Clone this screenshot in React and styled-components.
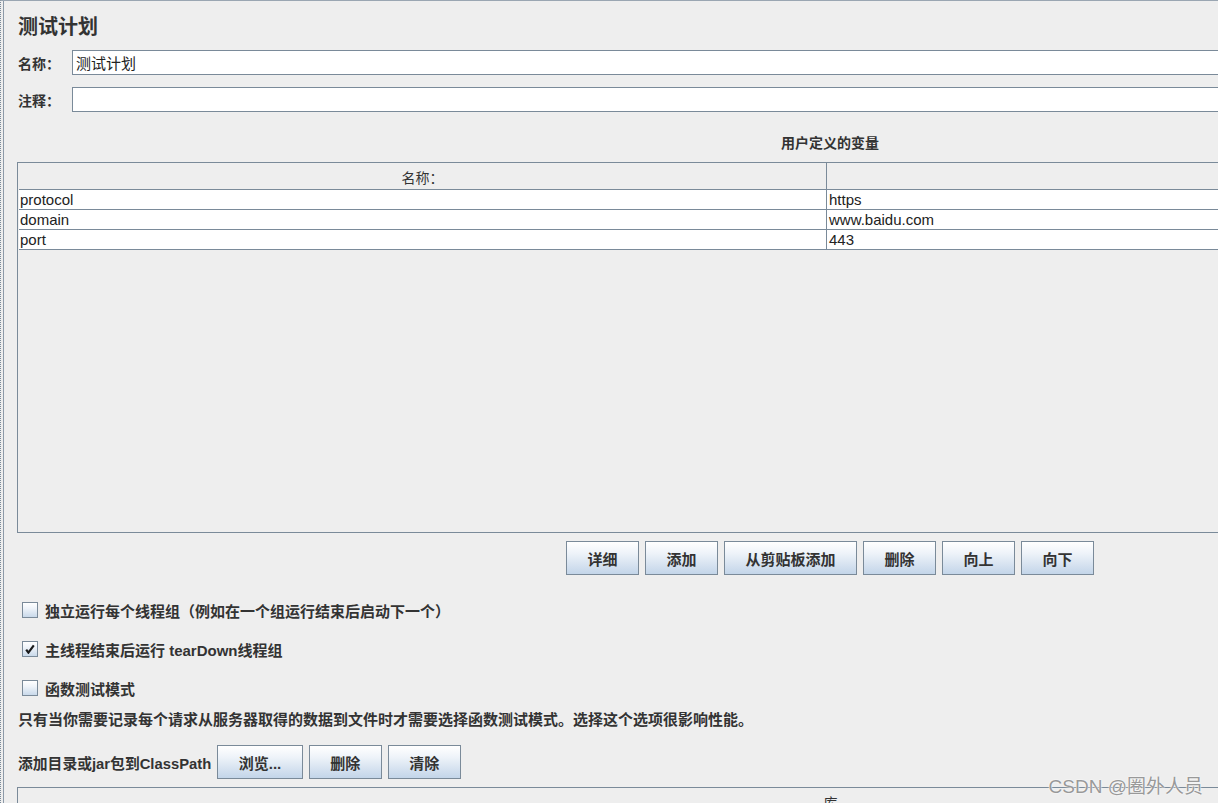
import React from "react";
import styled, { createGlobalStyle } from "styled-components";

const GlobalStyle = createGlobalStyle`
  html, body {
    margin: 0;
    padding: 0;
    background: #eeeeee;
    overflow: hidden;
  }
  body {
    font-family: "Liberation Sans", "Noto Sans CJK SC", sans-serif;
    color: #333333;
  }
`;

const variables = [
  { name: "protocol", value: "https" },
  { name: "domain", value: "www.baidu.com" },
  { name: "port", value: "443" },
];

const tableButtons = ["详细", "添加", "从剪贴板添加", "删除", "向上", "向下"];

const options = [
  { label: "独立运行每个线程组（例如在一个组运行结束后启动下一个）", checked: false },
  { label: "主线程结束后运行 tearDown线程组", checked: true },
  { label: "函数测试模式", checked: false },
];

const App = () => {
  return (
    <>
      <GlobalStyle />
      <Frame>
        <Panel>
          <Title>测试计划</Title>
          <FieldRow>
            <FieldLabel>名称：</FieldLabel>
            <TextInput defaultValue="测试计划" />
          </FieldRow>
          <FieldRow $gap={12}>
            <FieldLabel>注释：</FieldLabel>
            <TextInput defaultValue="" />
          </FieldRow>

          <SectionCaption>用户定义的变量</SectionCaption>
          <VarTable>
            <HeaderRow>
              <HeaderCell>名称：</HeaderCell>
              <HeaderCell />
            </HeaderRow>
            {variables.map((v) => (
              <DataRow key={v.name}>
                <DataCell>{v.name}</DataCell>
                <DataCell>{v.value}</DataCell>
              </DataRow>
            ))}
          </VarTable>

          <ButtonBar>
            {tableButtons.map((b) => (
              <Button key={b}>{b}</Button>
            ))}
          </ButtonBar>

          <OptionList>
            {options.map((o) => (
              <OptionRow key={o.label}>
                <CheckBox $checked={o.checked}>
                  {o.checked && (
                    <svg width="10" height="10" viewBox="0 0 10 10">
                      <path
                        d="M1.2 5.6 L3.4 8.6 L8.8 1.4"
                        fill="none"
                        stroke="#1a1a1a"
                        strokeWidth="2.2"
                      />
                    </svg>
                  )}
                </CheckBox>
                <OptionText>{o.label}</OptionText>
              </OptionRow>
            ))}
          </OptionList>

          <Note>
            只有当你需要记录每个请求从服务器取得的数据到文件时才需要选择函数测试模式。选择这个选项很影响性能。
          </Note>

          <ClassPathRow>
            <ClassPathLabel>添加目录或jar包到ClassPath</ClassPathLabel>
            <Button>浏览...</Button>
            <Button>删除</Button>
            <Button>清除</Button>
          </ClassPathRow>

          <LibTable>
            <LibHeader>库</LibHeader>
          </LibTable>
        </Panel>
        <Watermark>CSDN @圈外人员</Watermark>
      </Frame>
    </>
  );
};

export default App;

const Frame = styled.div`
  position: relative;
  width: 1218px;
  height: 803px;
  overflow: hidden;
  box-sizing: border-box;
  border-top: 1px solid #9aa6b2;
  border-left: 1px dotted #7a8a99;
  padding-left: 2px;
`;

const Panel = styled.div`
  display: flex;
  flex-direction: column;
  width: 1640px;
  height: 100%;
  box-sizing: border-box;
  border-left: 1px solid #8d9aa8;
  padding-left: 13px;
  & > * {
    flex-shrink: 0;
  }
`;

const Title = styled.div`
  margin-top: 14px;
  height: 24px;
  line-height: 24px;
  font-size: 20px;
  font-weight: 700;
  color: #333;
  padding-left: 1px;
`;

const FieldRow = styled.div`
  display: flex;
  align-items: center;
  margin-top: ${(p) => (p.$gap ? p.$gap : 11)}px;
  height: 25px;
`;

const FieldLabel = styled.label`
  width: 54px;
  flex-shrink: 0;
  padding-left: 1px;
  font-size: 14px;
  font-weight: 700;
  color: #333;
`;

const TextInput = styled.input`
  flex: 1;
  height: 25px;
  box-sizing: border-box;
  border: 1px solid #7a8a99;
  border-right: none;
  background: #ffffff;
  padding: 0 3px;
  font-family: "Liberation Sans", "Noto Sans CJK SC", sans-serif;
  font-size: 15px;
  color: #222;
  outline: none;
`;

const SectionCaption = styled.div`
  margin-top: 21px;
  height: 20px;
  line-height: 20px;
  text-align: center;
  font-size: 14px;
  font-weight: 700;
  color: #333;
`;

const VarTable = styled.div`
  margin-top: 9px;
  height: 371px;
  box-sizing: border-box;
  border: 1px solid #7a8a99;
  padding-left: 1px;
  display: flex;
  flex-direction: column;
`;

const HeaderRow = styled.div`
  display: grid;
  grid-template-columns: 807px 1fr;
  height: 26px;
  border-bottom: 1px solid #7a8a99;
`;

const HeaderCell = styled.div`
  display: flex;
  align-items: center;
  justify-content: center;
  font-size: 14px;
  color: #333;
  padding-top: 2px;
  & + & {
    border-left: 1px solid #7a8a99;
  }
`;

const DataRow = styled.div`
  display: grid;
  grid-template-columns: 807px 1fr;
  height: 19px;
  background: #ffffff;
  border-bottom: 1px solid #7a8a99;
`;

const DataCell = styled.div`
  display: flex;
  align-items: center;
  padding-left: 1px;
  font-size: 15px;
  color: #222;
  & + & {
    border-left: 1px solid #7a8a99;
    padding-left: 2px;
  }
`;

const ButtonBar = styled.div`
  display: flex;
  justify-content: center;
  gap: 6px;
  margin-top: 8px;
`;

const Button = styled.button`
  height: 34px;
  box-sizing: border-box;
  padding: 0 20.5px;
  border: 1px solid #7a8a99;
  border-radius: 0;
  background: linear-gradient(to bottom, #ffffff 0%, #eef3f9 35%, #c3d5e9 100%);
  font-family: "Liberation Sans", "Noto Sans CJK SC", sans-serif;
  font-size: 15px;
  font-weight: 700;
  color: #333;
  white-space: nowrap;
`;

const OptionList = styled.div`
  display: flex;
  flex-direction: column;
  gap: 19px;
  margin-top: 25px;
  padding-left: 5px;
`;

const OptionRow = styled.div`
  display: flex;
  align-items: center;
  height: 20px;
`;

const CheckBox = styled.span`
  display: flex;
  align-items: center;
  justify-content: center;
  width: 16px;
  height: 16px;
  box-sizing: border-box;
  border: 1px solid #7a8a99;
  background: linear-gradient(to bottom, #ffffff 0%, #eef3f9 40%, #c9d9ea 100%);
  margin-right: 7px;
`;

const OptionText = styled.span`
  font-size: 15px;
  font-weight: 700;
  color: #333;
  white-space: nowrap;
`;

const Note = styled.div`
  margin-top: 12px;
  height: 20px;
  line-height: 20px;
  padding-left: 1px;
  font-size: 15px;
  font-weight: 700;
  color: #333;
  white-space: nowrap;
`;

const ClassPathRow = styled.div`
  display: flex;
  align-items: center;
  gap: 6px;
  margin-top: 15px;
`;

const ClassPathLabel = styled.span`
  padding-left: 1px;
  font-size: 14.8px;
  font-weight: 700;
  color: #333;
  white-space: nowrap;
`;

const LibTable = styled.div`
  margin-top: 8px;
  flex: 1;
  border-top: 1px solid #7a8a99;
  border-left: 1px solid #7a8a99;
`;

const LibHeader = styled.div`
  text-align: center;
  padding-top: 4px;
  font-size: 14px;
  color: #333;
`;

const Watermark = styled.div`
  position: absolute;
  right: 15px;
  bottom: 5px;
  font-size: 19px;
  color: #999999;
  text-shadow: 0 0 2px #ffffff, 0 0 1px #ffffff;
  white-space: nowrap;
`;
